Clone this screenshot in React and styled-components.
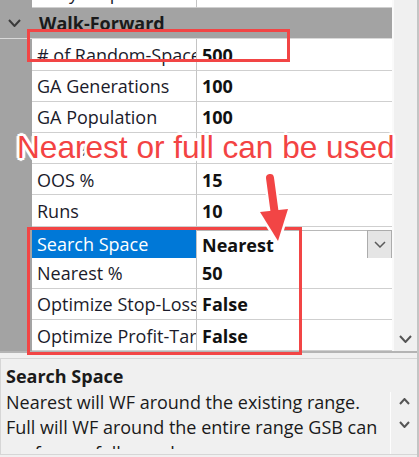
import styled, { createGlobalStyle } from "styled-components";

const GlobalStyle = createGlobalStyle`
  html, body {
    margin: 0;
    padding: 0;
    background: #f0f0f0;
  }
  body {
    font-family: "Open Sans", "Noto Sans", sans-serif;
  }
`;

const Frame = styled.div`
  position: relative;
  width: 419px;
  height: 457px;
  box-sizing: border-box;
  border-right: 2px solid #c4c4c4;
  background: #f0f0f0;
  overflow: hidden;
  display: flex;
  flex-direction: column;
  font-size: 18px;
  color: #1a1a1a;
`;

const GridArea = styled.div`
  display: flex;
  height: 353px;
  flex-shrink: 0;
  box-sizing: border-box;
  border-bottom: 2px solid #b4b4b4;
`;

const Viewport = styled.div`
  width: 392px;
  overflow: hidden;
  background: linear-gradient(to right, #a3a3a3 32px, #fff 32px);
  border-right: 2px solid #fafafa;
`;

const List = styled.div`
  margin-top: -23px;
`;

const Row = styled.div`
  display: grid;
  grid-template-columns: 32px 165px 1fr;
  height: 31.2px;
`;

const Gutter = styled.div`
  background: #a3a3a3;
  display: flex;
  align-items: center;
  justify-content: center;
  padding-right: 4px;
`;

const NameCell = styled.div`
  box-sizing: border-box;
  display: flex;
  align-items: center;
  padding: 1px 0 0 5px;
  white-space: nowrap;
  overflow: hidden;
  border-right: 1px solid #c4c4c4;
  border-bottom: 1px solid #cfcfcf;
  background: ${(p) => (p.$selected ? "#0078d7" : "#fff")};
  color: ${(p) => (p.$selected ? "#fff" : "#1b1b2b")};
`;

const ValueCell = styled.div`
  box-sizing: border-box;
  display: flex;
  align-items: center;
  padding: 1px 0 0 5px;
  font-weight: 700;
  white-space: nowrap;
  overflow: hidden;
  border-bottom: 1px solid #cfcfcf;
  background: #fff;
  color: #111;
`;

const ComboCell = styled.div`
  box-sizing: border-box;
  display: flex;
  padding-top: 3px;
  background: #fff;
  border-bottom: 1px solid #cfcfcf;
`;

const Combo = styled.div`
  flex: 1;
  display: flex;
  align-items: center;
  justify-content: space-between;
  border-top: 1px solid #b8b8b8;
  padding-left: 5px;
  font-weight: 700;
  color: #111;
  height: 30px;
  box-sizing: border-box;
`;

const DropButton = styled.div`
  width: 25px;
  height: 30px;
  box-sizing: border-box;
  align-self: flex-start;
  margin-top: -1px;
  border: 1px solid #acacac;
  background: #e5e5e5;
  display: flex;
  align-items: center;
  justify-content: center;
`;

const CategoryRow = styled.div`
  display: grid;
  grid-template-columns: 32px 1fr;
  height: 31.2px;
  background: #a3a3a3;
  border-bottom: 1px solid #d9d9d9;
  box-sizing: border-box;
`;

const CategoryTitle = styled.div`
  display: flex;
  align-items: center;
  padding-left: 7px;
  font-weight: 700;
  color: #1a1a1a;
`;

const ScrollTrack = styled.div`
  width: 23px;
  background: #f0f0f0;
  display: flex;
  flex-direction: column;
  justify-content: flex-end;
  align-items: center;
  padding-bottom: 8px;
  box-sizing: border-box;
`;

const DescBox = styled.div`
  margin-top: 5px;
  height: 97px;
  box-sizing: border-box;
  border: 1px solid #d6d6d6;
  border-right: none;
  display: flex;
  overflow: hidden;
`;

const DescText = styled.div`
  flex: 1;
  align-self: flex-start;
  height: 90px;
  box-sizing: border-box;
  padding: 5px 0 0 5px;
  line-height: 25.5px;
  overflow: hidden;
  color: #1a1a1a;
`;

const DescLine = styled.div`
  white-space: nowrap;
  font-weight: ${(p) => (p.$bold ? 700 : 400)};
`;

const DescScroll = styled.div`
  width: 26px;
  margin-top: 33px;
  border-left: 1px solid #fdfdfd;
  display: flex;
  flex-direction: column;
  align-items: center;
  gap: 16px;
  padding-top: 6px;
`;

const Box = styled.div`
  position: absolute;
  left: ${(p) => p.$x}px;
  top: ${(p) => p.$y}px;
  width: ${(p) => p.$w}px;
  height: ${(p) => p.$h}px;
  box-sizing: border-box;
  border: 3px solid #f24545;
  pointer-events: none;
`;

const Callout = styled.div`
  position: absolute;
  left: 17px;
  top: 132px;
  font-family: "Liberation Sans", Arial, sans-serif;
  font-size: 31.6px;
  line-height: 31px;
  color: #f34343;
  white-space: nowrap;
  text-shadow:
    2px 0 0 #fff, -2px 0 0 #fff, 0 2px 0 #fff, 0 -2px 0 #fff,
    2px 2px 0 #fff, -2px -2px 0 #fff, 2px -2px 0 #fff, -2px 2px 0 #fff,
    3px 0 1px #fff, -3px 0 1px #fff, 0 3px 1px #fff, 0 -3px 1px #fff;
`;

const ArrowSvg = styled.svg`
  position: absolute;
  left: 255px;
  top: 170px;
`;

function Chevron({ up, w = 12, h = 7, color = "#404040", sw = 2 }) {
  const d = up
    ? `M1 ${h - 1} L${w / 2} 1 L${w - 1} ${h - 1}`
    : `M1 1 L${w / 2} ${h - 1} L${w - 1} 1`;
  return (
    <svg width={w} height={h} viewBox={`0 0 ${w} ${h}`}>
      <path d={d} fill="none" stroke={color} strokeWidth={sw} />
    </svg>
  );
}

const rows = [
  { name: "Early Stop", value: "False" },
  null,
  { name: "# of Random-Space", value: "500" },
  { name: "GA Generations", value: "100" },
  { name: "GA Population", value: "100" },
  { name: "Step %", value: "" },
  { name: "OOS %", value: "15" },
  { name: "Runs", value: "10" },
  { name: "Search Space", value: "Nearest", selected: true, combo: true },
  { name: "Nearest %", value: "50" },
  { name: "Optimize Stop-Loss", value: "False" },
  { name: "Optimize Profit-Target", value: "False" },
];

export default function App() {
  return (
    <Frame>
      <GlobalStyle />
      <GridArea>
        <Viewport>
          <List>
            {rows.map((r, i) =>
              r === null ? (
                <CategoryRow key={i}>
                  <Gutter>
                    <Chevron w={13} h={8} color="#3a3a3a" />
                  </Gutter>
                  <CategoryTitle>Walk-Forward</CategoryTitle>
                </CategoryRow>
              ) : (
                <Row key={i}>
                  <Gutter />
                  <NameCell $selected={r.selected}>{r.name}</NameCell>
                  {r.combo ? (
                    <ComboCell>
                      <Combo>
                        {r.value}
                        <DropButton>
                          <Chevron w={12} h={7} color="#5a5a5a" sw={1.5} />
                        </DropButton>
                      </Combo>
                    </ComboCell>
                  ) : (
                    <ValueCell>{r.value}</ValueCell>
                  )}
                </Row>
              )
            )}
          </List>
        </Viewport>
        <ScrollTrack>
          <Chevron w={13} h={8} color="#555" />
        </ScrollTrack>
      </GridArea>
      <DescBox>
        <DescText>
          <DescLine $bold>Search Space</DescLine>
          <DescLine>Nearest will WF around the existing range.</DescLine>
          <DescLine>Full will WF around the entire range GSB can</DescLine>
          <DescLine>perform a full search.</DescLine>
        </DescText>
        <DescScroll>
          <Chevron up w={11} h={7} color="#555" />
          <Chevron w={11} h={7} color="#555" />
        </DescScroll>
      </DescBox>

      <Box $x={27} $y={29} $w={263} $h={33} />
      <Box $x={27} $y={227} $w={275} $h={128} />
      <Callout>Nearest or full can be used</Callout>
      <ArrowSvg width="40" height="76" viewBox="0 0 40 76">
        <g stroke="#fff" strokeWidth="5" strokeLinejoin="round" strokeLinecap="round">
          <line x1="15" y1="8" x2="20" y2="45" strokeWidth="13" />
          <polygon points="5,42 33,39 23,71" fill="#fff" />
        </g>
        <line x1="15" y1="8" x2="20" y2="45" stroke="#f24545" strokeWidth="8" strokeLinecap="round" />
        <polygon points="5,42 33,39 23,71" fill="#f24545" />
      </ArrowSvg>
    </Frame>
  );
}
